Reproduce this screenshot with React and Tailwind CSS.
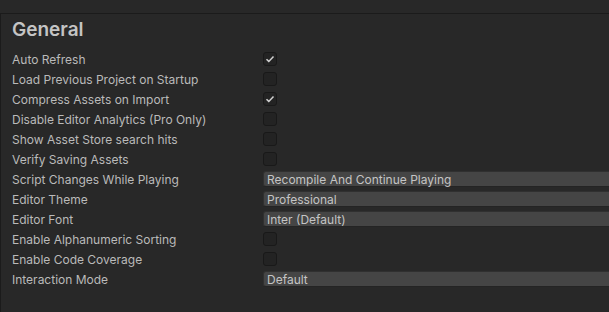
import React from "react";

const rows = [
  { label: "Auto Refresh", type: "check", checked: true },
  { label: "Load Previous Project on Startup", type: "check" },
  { label: "Compress Assets on Import", type: "check", checked: true },
  { label: "Disable Editor Analytics (Pro Only)", type: "check" },
  { label: "Show Asset Store search hits", type: "check" },
  { label: "Verify Saving Assets", type: "check" },
  { label: "Script Changes While Playing", type: "drop", value: "Recompile And Continue Playing" },
  { label: "Editor Theme", type: "drop", value: "Professional" },
  { label: "Editor Font", type: "drop", value: "Inter (Default)" },
  { label: "Enable Alphanumeric Sorting", type: "check" },
  { label: "Enable Code Coverage", type: "check" },
  { label: "Interaction Mode", type: "drop", value: "Default" },
];

function Check({ checked }) {
  return (
    <div className="w-[14px] h-[14px] rounded-[3px] bg-[#232323] border border-[#191919] flex items-center justify-center">
      {checked && (
        <svg width="10" height="10" viewBox="0 0 10 10">
          <path d="M1.5 5.2 L3.8 7.4 L8.5 2.6" fill="none" stroke="#d2d2d2" strokeWidth="1.5" />
        </svg>
      )}
    </div>
  );
}

export default function App() {
  return (
    <div className="w-[609px] h-[312px] bg-[#282828] overflow-hidden flex flex-col" style={{ fontFamily: "Inter, 'Noto Sans', sans-serif" }}>
      <div className="h-[14px] bg-[#282828] border-b border-[#1b1b1b] shrink-0" />
      <div className="flex-1 border-l border-[#1b1b1b] bg-[#282828]">
        <div className="pl-[11px] pt-[3px] h-[35px] text-[19px] font-semibold text-[#c4c4c4] leading-[26px]">General</div>
        <div className="flex flex-col">
          {rows.map((r, i) => (
            <div key={i} className="h-[20px] flex items-center">
              <div className="w-[262px] pl-[11px] pt-[2px] text-[12px] text-[#bababa] whitespace-nowrap">{r.label}</div>
              {r.type === "check" ? (
                <Check checked={r.checked} />
              ) : (
                <div className="h-[16px] flex-1 bg-[#454545] border border-[#303030] border-b-[#242424] rounded-l-[3px] pl-[3px] text-[12px] text-[#c4c4c4] leading-[15px] -mr-[4px]">
                  {r.value}
                </div>
              )}
            </div>
          ))}
        </div>
      </div>
    </div>
  );
}
